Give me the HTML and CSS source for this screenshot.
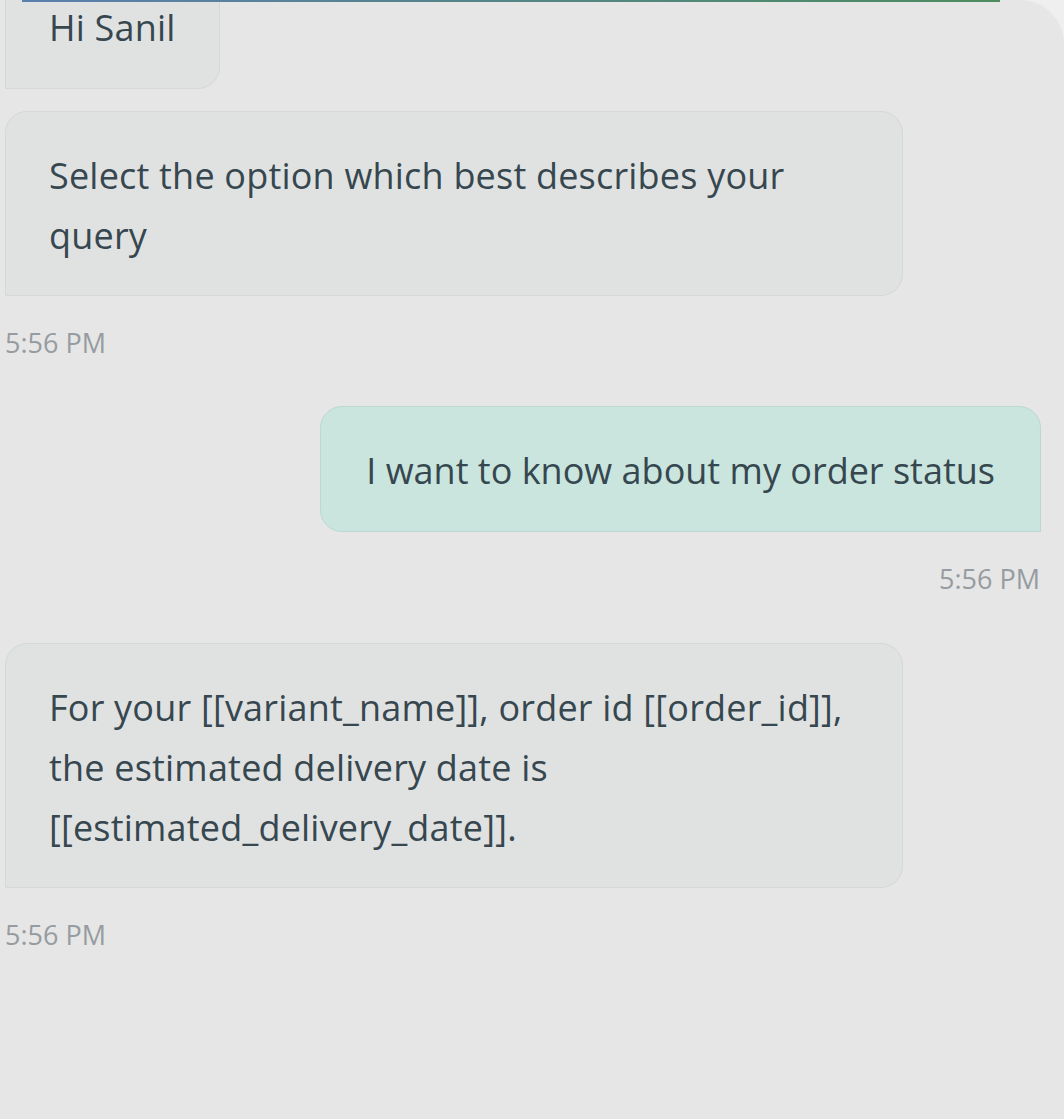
FILE: index.html
```html
<!DOCTYPE html>
<html lang="en">
<head>
  <meta charset="UTF-8" />
  <meta name="viewport" content="width=device-width, initial-scale=1.0"/>
  <title>Chat</title>
  <link rel="stylesheet" href="styles.css">
</head>
<body>
  <div class="chat-panel">
    <div class="top-bar"></div>

    <div class="messages">
      <div class="msg msg-bot msg-first">Hi Sanil</div>

      <div class="msg msg-bot msg-wide">Select the option which best describes your query</div>
      <div class="msg-time">5:56 PM</div>

      <div class="msg msg-user">I want to know about my order status</div>
      <div class="msg-time msg-time-right">5:56 PM</div>

      <div class="msg msg-bot msg-wide">For your [[variant_name]], order id [[order_id]], the estimated delivery date is [[estimated_delivery_date]].</div>
      <div class="msg-time">5:56 PM</div>
    </div>
  </div>
</body>
</html>
```

FILE: styles.css
```css
* {
  margin: 0;
  padding: 0;
  box-sizing: border-box;
}

body {
  font-family: 'Open Sans', 'Liberation Sans', sans-serif;
  background: #efefef;
  height: 100vh;
  overflow: hidden;
}

.chat-panel {
  position: relative;
  height: 100vh;
  background: #e6e6e6;
  border-top-right-radius: 44px;
  overflow: hidden;
}

/* thin header accent line */
.top-bar {
  position: absolute;
  top: 0;
  left: 22px;
  width: 978px;
  height: 2px;
  background: linear-gradient(90deg, #5b7fae, #4d8c5f);
  z-index: 2;
}

.messages {
  display: flex;
  flex-direction: column;
  padding: 0 23px 0 5px;
}

.msg {
  font-size: 36px;
  line-height: 60px;
  color: #37474f;
  padding: 34px 45px 29px 43px;
  border-radius: 22px;
}

.msg-bot {
  align-self: flex-start;
  background: #e0e2e2;
  border: 1px solid #d5d8d8;
  border-bottom-left-radius: 0;
  letter-spacing: 0.2px;
}

.msg-first {
  margin-top: -36px;
  padding-top: 33px;
  padding-bottom: 30px;
  padding-right: 43px;
  margin-bottom: 22px;
}

.msg-wide {
  width: 898px;
}

.msg-user {
  align-self: flex-end;
  background: #c9e5de;
  border: 1px solid #bcd8d0;
  border-bottom-right-radius: 0;
  padding: 34px 45px 30px 45px;
}

.msg-time {
  font-size: 27px;
  line-height: 30px;
  color: #969ca0;
  margin: 32px 0 48px;
}

.msg-time-right {
  align-self: flex-end;
  margin-right: 1px;
  margin-bottom: 49px;
}
```
